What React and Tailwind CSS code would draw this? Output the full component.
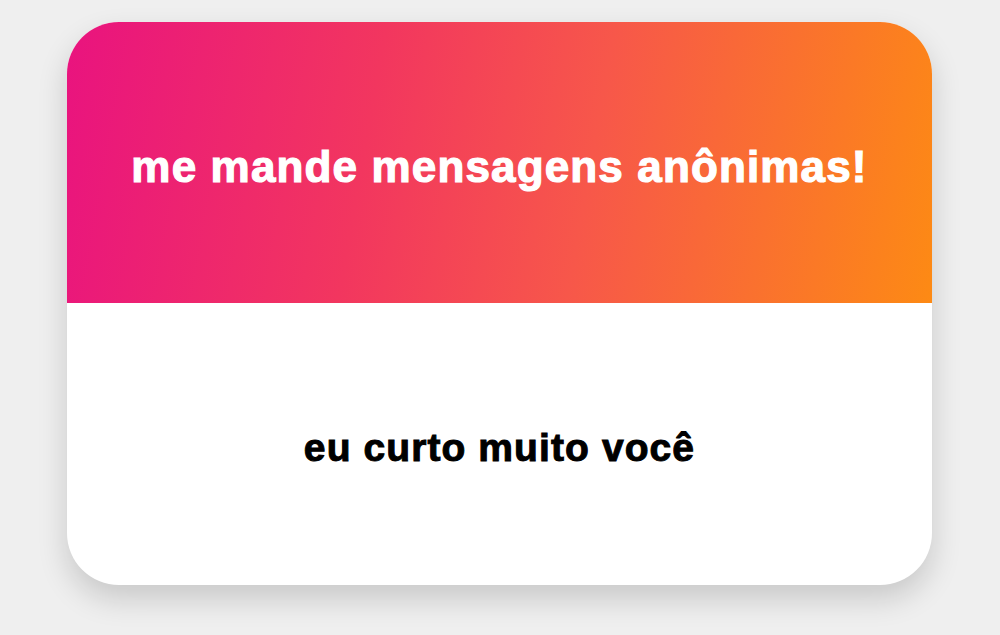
export default function App() {
  return (
    <div className="w-[1000px] h-[635px] bg-[#efefef] pt-[22px] pl-[67px]" style={{ fontFamily: '"Liberation Sans", Arial, sans-serif' }}>
      <div className="w-[865px] h-[563px] rounded-[52px] overflow-hidden bg-white shadow-[0_14px_30px_rgba(0,0,0,0.16)] flex flex-col">
        <div className="h-[281px] flex items-center justify-center bg-[linear-gradient(100deg,#e9137f_0%,#f2365f_35%,#f7574a_60%,#fd8a14_100%)]">
          <h1 className="text-white text-[44px] font-bold tracking-[0.026em] leading-none mt-[8px] [-webkit-text-stroke:1.2px_#fff]">me mande mensagens anônimas!</h1>
        </div>
        <div className="flex-1 flex items-center justify-center">
          <p className="text-black text-[39px] font-bold tracking-[0.028em] leading-none mt-[6px] [-webkit-text-stroke:1px_#000]">eu curto muito você</p>
        </div>
      </div>
    </div>
  );
}
